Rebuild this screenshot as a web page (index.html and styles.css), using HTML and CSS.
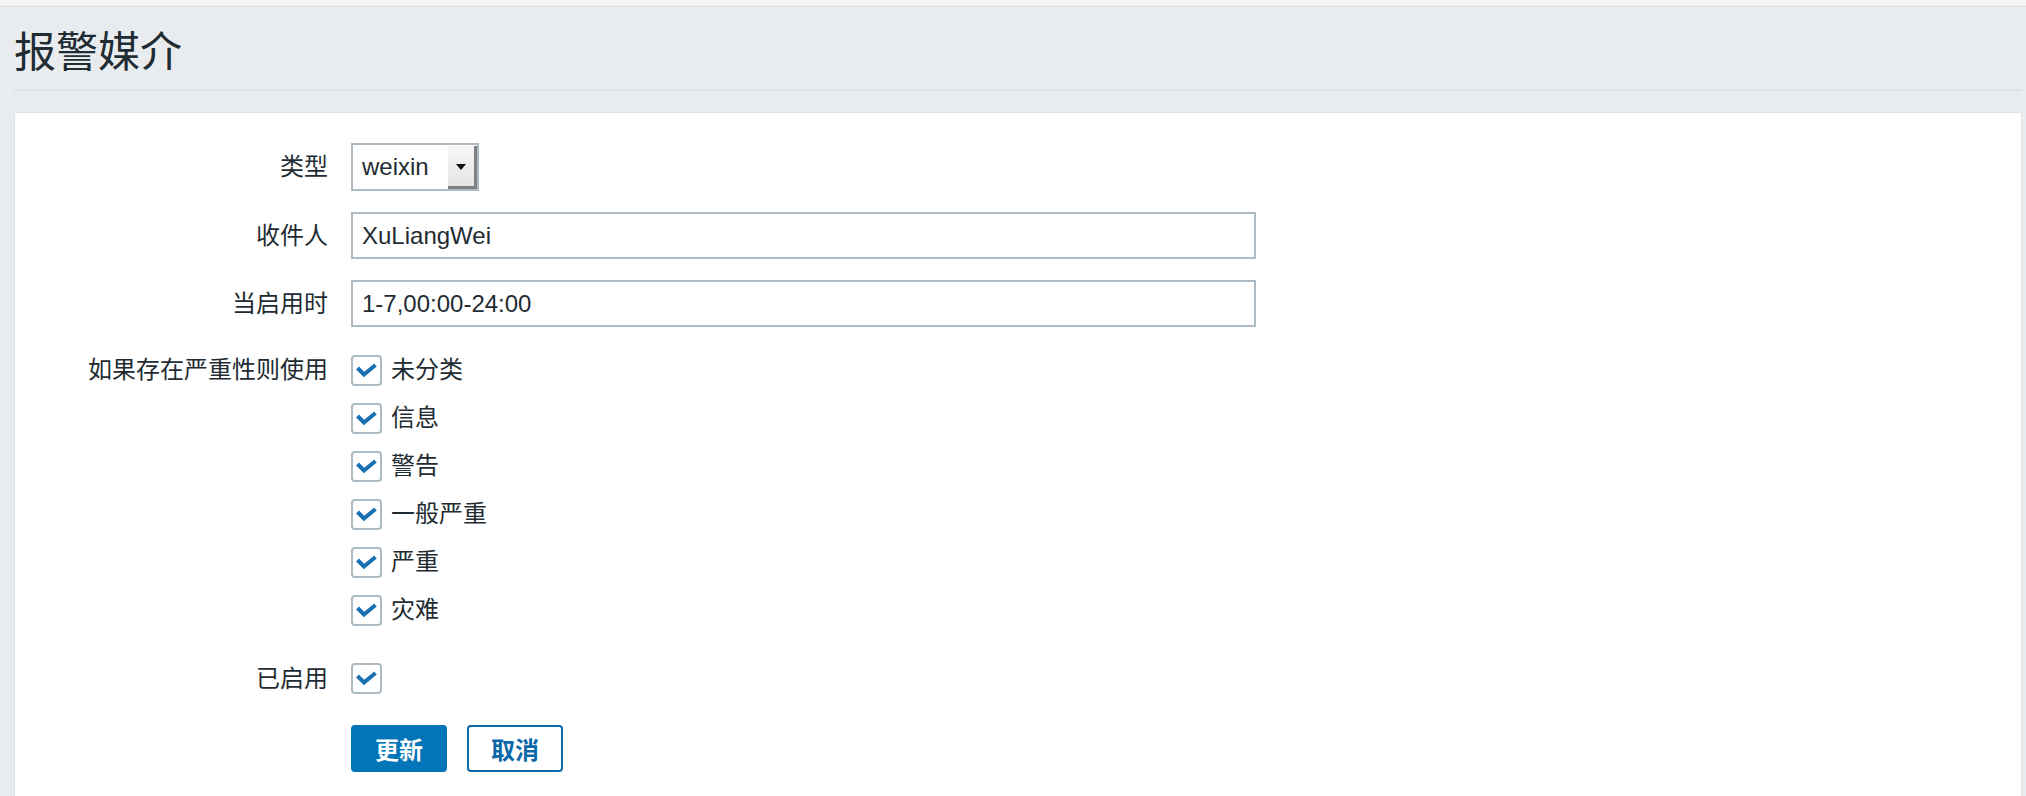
FILE: index.html
```html
<!DOCTYPE html>
<html lang="zh-CN">
<head>
<meta charset="utf-8">
<title>报警媒介</title>
<link rel="stylesheet" href="styles.css">
</head>
<body>
<div class="topbar"></div>
<header class="page-header">
  <h1 class="page-title">报警媒介</h1>
</header>
<main class="panel">
  <form class="form">
    <div class="form-row">
      <label class="form-label">类型</label>
      <div class="form-field">
        <div class="select">
          <span class="select-value">weixin</span>
          <span class="select-btn"><svg width="12" height="8" viewBox="0 0 12 8"><path d="M1 1 L11 1 L6 7 Z" fill="#111"/></svg></span>
        </div>
      </div>
    </div>
    <div class="form-row">
      <label class="form-label">收件人</label>
      <div class="form-field"><div class="text-input">XuLiangWei</div></div>
    </div>
    <div class="form-row row-gap-lg">
      <label class="form-label">当启用时</label>
      <div class="form-field"><div class="text-input">1-7,00:00-24:00</div></div>
    </div>
    <div class="form-row row-top row-gap-xl">
      <label class="form-label label-check">如果存在严重性则使用</label>
      <div class="form-field">
        <ul class="check-list">
          <li class="check-item"><span class="checkbox"><svg viewBox="0 0 27 27"><path d="M4.5 11 L11 17.5 L22.5 8"/></svg></span><span class="check-text">未分类</span></li>
          <li class="check-item"><span class="checkbox"><svg viewBox="0 0 27 27"><path d="M4.5 11 L11 17.5 L22.5 8"/></svg></span><span class="check-text">信息</span></li>
          <li class="check-item"><span class="checkbox"><svg viewBox="0 0 27 27"><path d="M4.5 11 L11 17.5 L22.5 8"/></svg></span><span class="check-text">警告</span></li>
          <li class="check-item"><span class="checkbox"><svg viewBox="0 0 27 27"><path d="M4.5 11 L11 17.5 L22.5 8"/></svg></span><span class="check-text">一般严重</span></li>
          <li class="check-item"><span class="checkbox"><svg viewBox="0 0 27 27"><path d="M4.5 11 L11 17.5 L22.5 8"/></svg></span><span class="check-text">严重</span></li>
          <li class="check-item"><span class="checkbox"><svg viewBox="0 0 27 27"><path d="M4.5 11 L11 17.5 L22.5 8"/></svg></span><span class="check-text">灾难</span></li>
        </ul>
      </div>
    </div>
    <div class="form-row row-gap-btn">
      <label class="form-label">已启用</label>
      <div class="form-field"><span class="checkbox"><svg viewBox="0 0 27 27"><path d="M4.5 11 L11 17.5 L22.5 8"/></svg></span></div>
    </div>
    <div class="form-row">
      <span class="form-label"></span>
      <div class="form-field buttons">
        <button type="button" class="btn btn-primary">更新</button>
        <button type="button" class="btn btn-alt">取消</button>
      </div>
    </div>
  </form>
</main>
</body>
</html>
```
FILE: styles.css
```css
html, body {
  margin: 0;
  padding: 0;
}
body {
  background: #e9ecef;
  color: #1f2c33;
  font-family: "Liberation Sans", "Noto Sans CJK SC", sans-serif;
  font-size: 24px;
  overflow: hidden;
}
.topbar {
  height: 6px;
  background: #f5f5f6;
  border-bottom: 1px solid #dcdee0;
}
.page-header {
  margin: 0 4px 0 14px;
  padding: 25px 0 15px 0;
  border-bottom: 2px solid #dde1e4;
}
.page-title {
  margin: 0;
  font-size: 42px;
  line-height: 42px;
  font-weight: 400;
  color: #1f2c33;
}
.panel {
  margin: 21px 4px 0 14px;
  background: #fff;
  border: 1px solid #dfe4e7;
  padding: 30px 0 60px 0;
}
.form {
  margin: 0;
}
.form-row {
  display: grid;
  grid-template-columns: 313px 1fr;
  column-gap: 23px;
  align-items: center;
  margin-bottom: 21px;
}
.form-row.row-gap-lg { margin-bottom: 28px; }
.form-row.row-gap-xl { margin-bottom: 38px; }
.form-row.row-gap-btn { margin-bottom: 31px; }
.form-row.row-top { align-items: start; }
.form-label {
  text-align: right;
  line-height: 30px;
  white-space: nowrap;
}
.form-field {
  display: flex;
  align-items: center;
}
.select {
  box-sizing: border-box;
  width: 128px;
  height: 48px;
  border: 2px solid #acbbc2;
  background: #fff;
  display: flex;
  align-items: stretch;
}
.select-value {
  flex: 1;
  padding-left: 9px;
  line-height: 44px;
}
.select-btn {
  box-sizing: border-box;
  width: 29px;
  margin: 1px 0 0 0;
  background: linear-gradient(#f6f6f6, #e4e4e4);
  border-right: 3px solid #808080;
  border-bottom: 3px solid #808080;
  display: flex;
  align-items: center;
  justify-content: center;
}
.select-btn svg {
  display: block;
  margin-top: 2px;
}
.text-input {
  box-sizing: border-box;
  width: 905px;
  height: 47px;
  border: 2px solid #acbbc2;
  background: #fff;
  padding-left: 9px;
  line-height: 43px;
}
.check-list {
  list-style: none;
  margin: 0;
  padding: 0;
  display: flex;
  flex-direction: column;
  gap: 18px;
}
.check-item {
  display: flex;
  align-items: center;
  height: 30px;
}
.checkbox {
  box-sizing: border-box;
  width: 31px;
  height: 31px;
  border: 2px solid #acbbc2;
  border-radius: 4px;
  background: #fff;
  display: block;
  flex: none;
}
.checkbox svg {
  display: block;
  width: 27px;
  height: 27px;
}
.checkbox svg path {
  fill: none;
  stroke: #1b70b0;
  stroke-width: 4;
  stroke-linecap: butt;
  stroke-linejoin: miter;
}
.check-text {
  margin-left: 9px;
  line-height: 30px;
}
.buttons {
  gap: 20px;
}
.btn {
  box-sizing: border-box;
  width: 96px;
  height: 47px;
  border-radius: 4px;
  font-family: "Liberation Sans", "Noto Sans CJK SC", sans-serif;
  font-size: 24px;
  font-weight: 700;
  padding: 0;
  cursor: pointer;
}
.btn-primary {
  background: #0275b8;
  border: 2px solid #0275b8;
  color: #fff;
}
.btn-alt {
  background: #fff;
  border: 2px solid #0a6aa8;
  color: #0a68a8;
}
```
